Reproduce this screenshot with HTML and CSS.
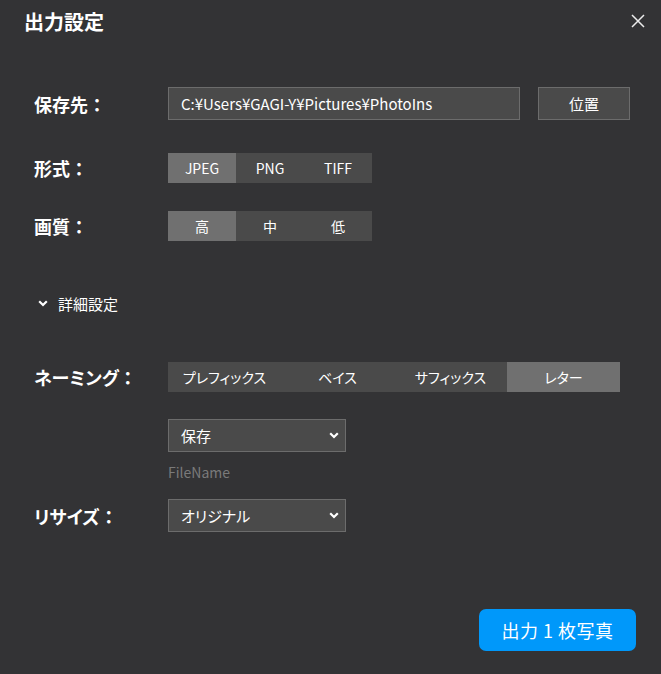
FILE: index.html
```html
<!DOCTYPE html>
<html lang="ja">
<head>
<meta charset="utf-8">
<title>出力設定</title>
<link rel="stylesheet" href="styles.css">
</head>
<body>
<div class="dialog">
  <div class="header">
    <div class="title">出力設定</div>
    <svg class="close" width="14" height="14" viewBox="0 0 14 14"><path d="M1 1L13 13M13 1L1 13" stroke="#ececec" stroke-width="1.5" fill="none"/></svg>
  </div>

  <div class="row row-path">
    <div class="label">保存先<span class="colon">：</span></div>
    <div class="path-input">C:¥Users¥GAGI-Y¥Pictures¥PhotoIns</div>
    <div class="btn-loc">位置</div>
  </div>

  <div class="row row-format">
    <div class="label">形式<span class="colon">：</span></div>
    <div class="seg">
      <div class="seg-item active">JPEG</div>
      <div class="seg-item">PNG</div>
      <div class="seg-item">TIFF</div>
    </div>
  </div>

  <div class="row row-quality">
    <div class="label">画質<span class="colon">：</span></div>
    <div class="seg">
      <div class="seg-item active">高</div>
      <div class="seg-item">中</div>
      <div class="seg-item">低</div>
    </div>
  </div>

  <div class="advanced">
    <svg class="adv-chevron" width="10" height="7" viewBox="0 0 10 7"><path d="M1.2 1.2L5 5L8.8 1.2" stroke="#ffffff" stroke-width="2.2" fill="none"/></svg>
    <span>詳細設定</span>
  </div>

  <div class="row row-naming">
    <div class="label">ネーミング<span class="colon">：</span></div>
    <div class="seg seg-wide">
      <div class="seg-item">プレフィックス</div>
      <div class="seg-item">ベイス</div>
      <div class="seg-item">サフィックス</div>
      <div class="seg-item active">レター</div>
    </div>
  </div>

  <div class="row row-select1">
    <div class="label"></div>
    <div class="select">
      <span>保存</span>
      <svg width="10" height="7" viewBox="0 0 10 7"><path d="M1.2 1.2L5 5L8.8 1.2" stroke="#ffffff" stroke-width="2.2" fill="none"/></svg>
    </div>
  </div>

  <div class="row row-hint">
    <div class="label"></div>
    <div class="hint">FileName</div>
  </div>

  <div class="row row-resize">
    <div class="label">リサイズ<span class="colon">：</span></div>
    <div class="select">
      <span>オリジナル</span>
      <svg width="10" height="7" viewBox="0 0 10 7"><path d="M1.2 1.2L5 5L8.8 1.2" stroke="#ffffff" stroke-width="2.2" fill="none"/></svg>
    </div>
  </div>

  <div class="footer">
    <div class="btn-primary">出力 1 枚写真</div>
  </div>
</div>
</body>
</html>
```

FILE: styles.css
```css
html, body {
  margin: 0;
  padding: 0;
  background: #333335;
}
body {
  font-family: "Noto Sans CJK JP", "Noto Sans", sans-serif;
  color: #ffffff;
  font-feature-settings: "palt";
}
.dialog {
  width: 661px;
  height: 674px;
  display: flex;
  flex-direction: column;
  box-sizing: border-box;
}
.header {
  display: flex;
  justify-content: space-between;
  align-items: flex-start;
  padding: 8px 16px 0 24px;
  height: 36px;
  box-sizing: border-box;
}
.title {
  font-size: 20px;
  font-weight: bold;
  line-height: 28px;
  font-feature-settings: normal;
}
.close {
  margin-top: 6px;
}
.row {
  display: flex;
  align-items: center;
  padding-left: 34px;
}
.label {
  width: 134px;
  flex: none;
  font-size: 18px;
  font-weight: bold;
  line-height: 24px;
}
.colon {
  font-feature-settings: normal;
}
.row-path .label, .row-format .label, .row-quality .label {
  font-feature-settings: normal;
}
.row-path { margin-top: 51px; height: 33px; }
.row-format { margin-top: 33px; height: 30px; }
.row-quality { margin-top: 28px; height: 30px; }
.row-naming { margin-top: 47px; height: 30px; }
.row-select1 { margin-top: 27px; height: 33px; }
.row-hint { margin-top: 10px; height: 20px; }
.row-resize { margin-top: 17px; height: 33px; }

.path-input {
  width: 352px;
  height: 33px;
  box-sizing: border-box;
  background: #4a4a4a;
  border: 1px solid #6c6c6c;
  font-size: 15px;
  line-height: 31px;
  padding-left: 12px;
}
.btn-loc {
  margin-left: 18px;
  width: 92px;
  height: 33px;
  box-sizing: border-box;
  background: #4a4a4a;
  border: 1px solid #6c6c6c;
  font-size: 15px;
  line-height: 31px;
  text-align: center;
  font-feature-settings: normal;
}
.seg {
  display: flex;
  height: 30px;
  background: #4a4a4a;
}
.seg-item {
  width: 68px;
  font-size: 14px;
  line-height: 30px;
  text-align: center;
}
.seg-wide .seg-item {
  width: 113px;
}
.seg-item.active {
  background: #707070;
}
.advanced {
  margin-top: 50px;
  padding-left: 38px;
  display: flex;
  align-items: center;
  height: 24px;
  font-size: 15px;
  font-feature-settings: normal;
}
.adv-chevron {
  margin-right: 10px;
}
.select {
  width: 178px;
  height: 33px;
  box-sizing: border-box;
  background: #4a4a4a;
  border: 1px solid #6c6c6c;
  display: flex;
  align-items: center;
  justify-content: space-between;
  padding: 0 6px 0 12px;
  font-size: 15px;
}
.hint {
  font-size: 14px;
  color: #7a7a7a;
  line-height: 20px;
}
.footer {
  margin-top: auto;
  display: flex;
  justify-content: flex-end;
  padding: 0 25px 23px 0;
}
.btn-primary {
  width: 157px;
  height: 42px;
  border-radius: 7px;
  background: #0098fa;
  font-size: 18px;
  line-height: 42px;
  text-align: center;
  letter-spacing: 0.5px;
  font-feature-settings: normal;
}
```
